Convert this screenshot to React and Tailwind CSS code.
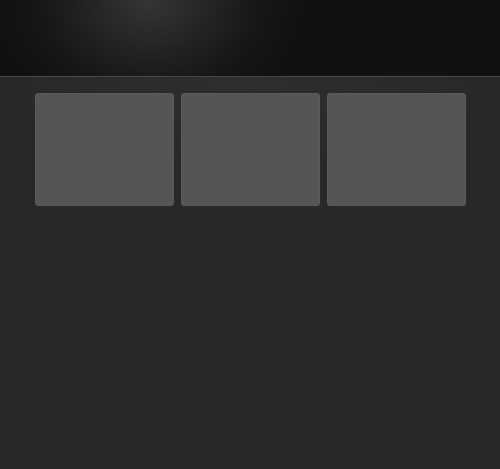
import React from 'react';

const App = () => {
  const cards = [0, 1, 2];

  return (
    <div className="min-h-[469px] bg-[#282828] font-['Liberation_Sans',sans-serif]">
      {/* Top bar with a soft spotlight */}
      <header className="h-[77px] border-b border-[#484848] bg-[#111111] bg-[radial-gradient(ellipse_150px_120px_at_150px_0px,#353535_0%,#222222_45%,#161616_75%,#111111_100%)]" />

      <main className="bg-[radial-gradient(ellipse_260px_90px_at_250px_0px,#2e2e2e_0%,#282828_100%)] pt-4 pb-10">
        <div className="mx-auto grid w-[431px] grid-cols-3 gap-[7px]">
          {cards.map((c) => (
            <div
              key={c}
              className="h-[113px] rounded-[3px] bg-[#555555] border border-[#5a5a5a]"
            />
          ))}
        </div>
      </main>
    </div>
  );
};

export default App;
